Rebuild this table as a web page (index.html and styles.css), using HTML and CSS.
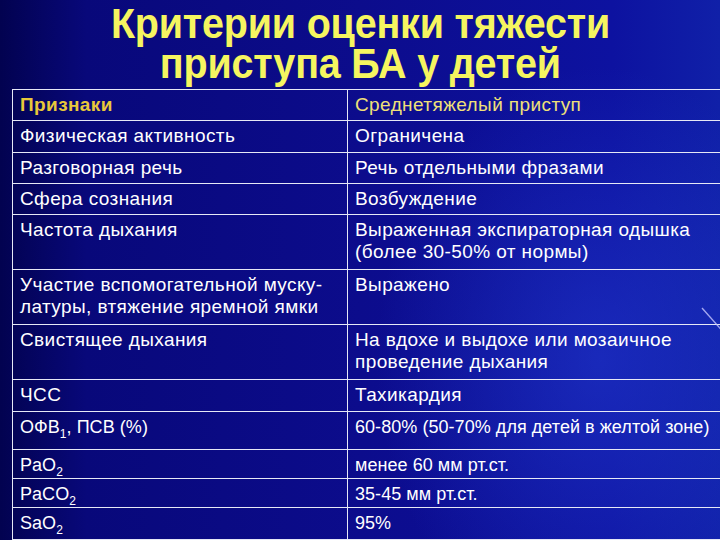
FILE: index.html
```html
<!DOCTYPE html>
<html lang="ru">
<head>
<meta charset="utf-8">
<title>Критерии оценки тяжести приступа БА у детей</title>
<link rel="stylesheet" href="styles.css">
</head>
<body>
<div class="slide">
  <h1 class="title"><span class="title-line">Критерии оценки тяжести</span><span class="title-line">приступа БА у детей</span></h1>
  <table class="grid">
    <colgroup><col class="c1"><col class="c2"></colgroup>
    <tr class="r31 head"><td><b>Признаки</b></td><td>Среднетяжелый приступ</td></tr>
    <tr class="r32"><td>Физическая активность</td><td>Ограничена</td></tr>
    <tr class="r31"><td>Разговорная речь</td><td>Речь отдельными фразами</td></tr>
    <tr class="r31"><td>Сфера сознания</td><td>Возбуждение</td></tr>
    <tr class="r55"><td>Частота дыхания</td><td>Выраженная экспираторная одышка<br>(более 30-50% от нормы)</td></tr>
    <tr class="r55"><td>Участие вспомогательной муску-<br>латуры, втяжение яремной ямки</td><td>Выражено</td></tr>
    <tr class="r55"><td>Свистящее дыхания</td><td>На вдохе и выдохе или мозаичное<br>проведение дыхания</td></tr>
    <tr class="r32"><td>ЧСС</td><td>Тахикардия</td></tr>
    <tr class="r38"><td class="small">ОФВ<sub>1</sub>, ПСВ (%)</td><td class="small">60-80% (50-70% для детей в желтой зоне)</td></tr>
    <tr class="r29"><td class="small">PaO<sub>2</sub></td><td class="small">менее 60 мм рт.ст.</td></tr>
    <tr class="r29"><td class="small">PaCO<sub>2</sub></td><td class="small">35-45 мм рт.ст.</td></tr>
    <tr class="r32"><td class="small">SaO<sub>2</sub></td><td class="small">95%</td></tr>
  </table>
  <svg class="streak" width="40" height="60" viewBox="0 0 40 60"><line x1="8" y1="8" x2="40" y2="44" stroke="#c8c8ff" stroke-width="1.4" opacity="0.8"/></svg>
</div>
</body>
</html>
```
FILE: styles.css
```css
html, body {
  margin: 0;
  padding: 0;
  width: 720px;
  height: 540px;
  overflow: hidden;
}
body {
  background: #0a0a78;
  font-family: "Liberation Sans", Arial, sans-serif;
}
.slide {
  position: relative;
  width: 720px;
  height: 540px;
  overflow: hidden;
  background:
    radial-gradient(ellipse 320px 420px at 600px 360px, rgba(40, 70, 220, 0.45), rgba(40, 70, 220, 0) 70%),
    linear-gradient(90deg, #020250 0%, #08087a 12%, #0c0c8c 50%, #0d12a0 85%, #1020a8 100%);
}
.title {
  margin: 0;
  box-sizing: border-box;
  padding-top: 4px;
  height: 89px;
  display: flex;
  flex-direction: column;
  align-items: center;
  color: #f5f560;
  font-weight: bold;
  font-size: 42px;
  line-height: 40px;
  letter-spacing: -0.2px;
}
.title-line {
  display: block;
  transform: scaleX(0.94);
  white-space: nowrap;
}
.grid {
  margin-left: 12px;
  width: 740px;
  border-collapse: collapse;
  table-layout: fixed;
  color: #ffffff;
  font-size: 19px;
  letter-spacing: 0.4px;
  line-height: 22px;
}
.c1 { width: 335px; }
.grid td {
  border: 1px solid #e6e8f6;
  padding: 4px 4px 0 7px;
  vertical-align: top;
  white-space: nowrap;
  overflow: hidden;
}
.grid .head td { color: #f0e078; }
.grid .head td b { color: #e8c83a; }
.grid td.small { font-size: 18px; letter-spacing: 0.05px; }
.grid sub { font-size: 12px; line-height: 0; vertical-align: -5px; letter-spacing: 0; }
.r29 { height: 29px; }
.r31 { height: 31px; }
.r32 { height: 32px; }
.r38 { height: 38px; }
.r55 { height: 55px; }
.streak {
  position: absolute;
  left: 694px;
  top: 300px;
}
```
